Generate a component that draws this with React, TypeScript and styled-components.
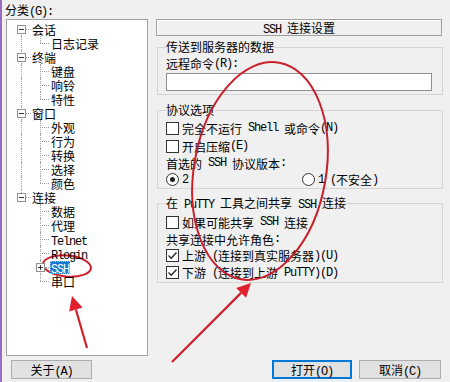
import React from 'react'
import styled, { createGlobalStyle } from 'styled-components'

const GlobalStyle = createGlobalStyle`
  html, body {
    margin: 0;
    padding: 0;
    background: #f0f0f0;
  }
  body {
    font-family: "Noto Sans CJK SC", "Liberation Sans", sans-serif;
    font-size: 12px;
    color: #000;
  }
`

const Window = styled.div`
  position: relative;
  box-sizing: border-box;
  width: 450px;
  height: 382px;
  padding-top: 2px;
  border-left: 2px solid #9b6bbf;
  background: #f0f0f0;
  display: flex;
  flex-direction: column;
  overflow: hidden;
`

const Body = styled.div`
  display: flex;
  height: 354px;
`

const Sidebar = styled.div`
  width: 142px;
  margin-left: 4px;
  display: flex;
  flex-direction: column;
`

const Caption = styled.div`
  height: 17px;
  line-height: 15px;
  margin-left: -1px;
`

const TreeBox = styled.div`
  flex: 1;
  box-sizing: border-box;
  padding-top: 2px;
  background: #fff;
  border: 1px solid #a0a0a0;
`

const Row = styled.div<{ $level: number }>`
  position: relative;
  height: 14px;
  display: flex;
  align-items: center;
  padding-left: ${(p) => (p.$level === 0 ? 24 : 43)}px;
`

const Label = styled.span<{ $selected?: boolean }>`
  position: relative;
  z-index: 1;
  height: 13px;
  line-height: 13px;
  padding: 0 1px;
  white-space: nowrap;
  background: ${(p) => (p.$selected ? '#1b78d0' : 'transparent')};
  color: ${(p) => (p.$selected ? '#fff' : '#000')};
  outline: ${(p) => (p.$selected ? '1px dotted #9cc8f0' : 'none')};
  outline-offset: -1px;
`

const VLine = styled.span<{ $left: number; $top: number; $bottom: number }>`
  position: absolute;
  left: ${(p) => p.$left}px;
  top: ${(p) => p.$top}px;
  bottom: ${(p) => p.$bottom}px;
  border-left: 1px dotted #a0a0a0;
`

const HLine = styled.span<{ $left: number; $width: number }>`
  position: absolute;
  top: 7px;
  left: ${(p) => p.$left}px;
  width: ${(p) => p.$width}px;
  border-top: 1px dotted #a0a0a0;
`

const Expander = styled.span<{ $left: number; $open: boolean }>`
  position: absolute;
  z-index: 1;
  left: ${(p) => p.$left}px;
  top: 3px;
  box-sizing: border-box;
  width: 9px;
  height: 9px;
  border: 1px solid #919191;
  background: #fff;

  &::before {
    content: '';
    position: absolute;
    left: 1px;
    top: 3px;
    width: 5px;
    height: 1px;
    background: #333;
  }

  &::after {
    content: '';
    display: ${(p) => (p.$open ? 'none' : 'block')};
    position: absolute;
    left: 3px;
    top: 1px;
    width: 1px;
    height: 5px;
    background: #333;
  }
`

const Panel = styled.div`
  width: 287px;
  margin-left: 8px;
  padding-top: 17px;
`

const Header = styled.div`
  box-sizing: border-box;
  width: 286px;
  height: 17px;
  line-height: 15px;
  text-align: center;
  border: 1px solid #a0a0a0;
  box-shadow: inset 1px 1px #fff;
`

const Group = styled.fieldset<{ $top: number; $pt: number; $pb: number }>`
  min-width: 0;
  width: 286px;
  box-sizing: border-box;
  margin: ${(p) => p.$top}px 0 0 1px;
  padding: ${(p) => p.$pt}px 8px ${(p) => p.$pb}px 8px;
  border: 1px solid #d5d5d5;
`

const Legend = styled.legend`
  padding: 0;
  height: 16px;
  line-height: 16px;
`

const Line = styled.div<{ $h: number }>`
  height: ${(p) => p.$h}px;
  display: flex;
  align-items: center;
  white-space: nowrap;
`

const Input = styled.div`
  box-sizing: border-box;
  width: 266px;
  height: 18px;
  margin-top: 1px;
  background: #fff;
  border: 1px solid #8f8f8f;
`

const Box = styled.span<{ $round?: boolean }>`
  flex: none;
  position: relative;
  box-sizing: border-box;
  width: 13px;
  height: 13px;
  margin-right: 3px;
  background: #fff;
  border: 1px solid #333;
  border-radius: ${(p) => (p.$round ? '50%' : '0')};
  display: flex;
  align-items: center;
  justify-content: center;
`

const Dot = styled.span`
  width: 5px;
  height: 5px;
  border-radius: 50%;
  background: #222;
`

const Radios = styled.div`
  display: grid;
  grid-template-columns: 136px 136px;
  height: 15px;
  align-items: center;
`

const Option = styled.div`
  display: flex;
  align-items: center;
  white-space: nowrap;
`

const Half = styled.span`
  font-family: "Liberation Mono", monospace;
  letter-spacing: -1.2px;
  white-space: pre;
`

const Footer = styled.div`
  display: flex;
  margin-top: 4px;
  padding: 0 9px;
`

const Button = styled.button<{ $w: number; $primary?: boolean }>`
  box-sizing: border-box;
  width: ${(p) => p.$w}px;
  height: 19px;
  margin: 0;
  padding: 0;
  font: inherit;
  color: #000;
  line-height: ${(p) => (p.$primary ? 15 : 17)}px;
  background: #e1e1e1;
  border: ${(p) => (p.$primary ? '2px solid #0078d7' : '1px solid #adadad')};
`

const Spacer = styled.div`
  flex: 1;
`

const Gap = styled.div`
  width: 7px;
`

const Overlay = styled.svg`
  position: absolute;
  left: -2px;
  top: 0;
  pointer-events: none;
`

function T({ s }: { s: string }) {
  return (
    <>
      {s.split(/([\x20-\x7e]+)/).map((part, i) =>
        /^[\x20-\x7e]+$/.test(part) ? <Half key={i}>{part}</Half> : part,
      )}
    </>
  )
}

const tree = [
  { label: '会话', children: ['日志记录'] },
  { label: '终端', children: ['键盘', '响铃', '特性'] },
  { label: '窗口', children: ['外观', '行为', '转换', '选择', '颜色'] },
  { label: '连接', children: ['数据', '代理', 'Telnet', 'Rlogin', 'SSH', '串口'] },
]

function Tree() {
  const rows: React.ReactNode[] = []
  tree.forEach((node, i) => {
    const lastRoot = i === tree.length - 1
    rows.push(
      <Row key={node.label} $level={0}>
        <VLine $left={14} $top={i === 0 ? 7 : 0} $bottom={lastRoot ? 7 : 0} />
        <HLine $left={14} $width={10} />
        <Expander $left={10} $open />
        <Label>
          <T s={node.label} />
        </Label>
      </Row>,
    )
    node.children.forEach((child, j) => {
      const lastChild = j === node.children.length - 1
      const ssh = child === 'SSH'
      rows.push(
        <Row key={node.label + child} $level={1}>
          {!lastRoot && <VLine $left={14} $top={0} $bottom={0} />}
          <VLine $left={33} $top={0} $bottom={lastChild ? 7 : 0} />
          <HLine $left={33} $width={9} />
          {ssh && <Expander $left={29} $open={false} />}
          <Label $selected={ssh}>
            <T s={child} />
          </Label>
        </Row>,
      )
    })
  })
  return <TreeBox>{rows}</TreeBox>
}

function Check({ on }: { on?: boolean }) {
  return (
    <Box>
      {on && (
        <svg width="11" height="11" viewBox="0 0 11 11">
          <path d="M1.5 5.5 L4.2 8.2 L9.5 2.5" fill="none" stroke="#222" strokeWidth="1.3" />
        </svg>
      )}
    </Box>
  )
}

function Arrow({ x1, y1, x2, y2 }: { x1: number; y1: number; x2: number; y2: number }) {
  const dx = x2 - x1
  const dy = y2 - y1
  const len = Math.hypot(dx, dy)
  const ux = dx / len
  const uy = dy / len
  const bx = x2 - ux * 14
  const by = y2 - uy * 14
  const pts = [
    [x2, y2],
    [bx - uy * 7, by + ux * 7],
    [bx + uy * 7, by - ux * 7],
  ]
  return (
    <g>
      <line x1={x1} y1={y1} x2={bx} y2={by} stroke="#d0202c" strokeWidth="2.2" />
      <polygon points={pts.map((p) => p.join(',')).join(' ')} fill="#e0202c" />
    </g>
  )
}

export default function App() {
  return (
    <>
      <GlobalStyle />
      <Window>
        <Body>
          <Sidebar>
            <Caption>
              <T s="分类(G):" />
            </Caption>
            <Tree />
          </Sidebar>
          <Panel>
            <Header>
              <T s="SSH 连接设置" />
            </Header>
            <Group $top={3} $pt={0} $pb={3}>
              <Legend>传送到服务器的数据</Legend>
              <Line $h={17}>
                <T s="远程命令(R):" />
              </Line>
              <Input />
            </Group>
            <Group $top={7} $pt={1} $pb={2}>
              <Legend>协议选项</Legend>
              <Line $h={18}>
                <Check />
                <T s="完全不运行 Shell 或命令(N)" />
              </Line>
              <Line $h={18}>
                <Check />
                <T s="开启压缩(E)" />
              </Line>
              <Line $h={16}>
                <T s="首选的 SSH 协议版本:" />
              </Line>
              <Radios>
                <Option>
                  <Box $round>
                    <Dot />
                  </Box>
                  <T s="2" />
                </Option>
                <Option>
                  <Box $round />
                  <T s="1 (不安全)" />
                </Option>
              </Radios>
            </Group>
            <Group $top={6} $pt={2} $pb={1}>
              <Legend>
                <T s="在 PuTTY 工具之间共享 SSH 连接" />
              </Legend>
              <Line $h={18}>
                <Check />
                <T s="如果可能共享 SSH 连接" />
              </Line>
              <Line $h={16}>
                <T s="共享连接中允许角色:" />
              </Line>
              <Line $h={17}>
                <Check on />
                <T s="上游 (连接到真实服务器)(U)" />
              </Line>
              <Line $h={17}>
                <Check on />
                <T s="下游 (连接到上游 PuTTY)(D)" />
              </Line>
            </Group>
          </Panel>
        </Body>
        <Footer>
          <Button $w={81}>
            <T s="关于(A)" />
          </Button>
          <Spacer />
          <Button $w={80} $primary>
            <T s="打开(O)" />
          </Button>
          <Gap />
          <Button $w={82}>
            <T s="取消(C)" />
          </Button>
        </Footer>
        <Overlay width="450" height="382" viewBox="0 0 450 382">
          <ellipse
            cx="67"
            cy="266"
            rx="24"
            ry="10.5"
            transform="rotate(5 67 266)"
            fill="none"
            stroke="#d0202c"
            strokeWidth="2"
          />
          <ellipse
            cx="260"
            cy="171"
            rx="66"
            ry="110"
            transform="rotate(10 260 171)"
            fill="none"
            stroke="#c8202c"
            strokeWidth="2"
          />
          <Arrow x1={87} y1={348} x2={72} y2={296} />
          <Arrow x1={172} y1={362} x2={251} y2={283} />
        </Overlay>
      </Window>
    </>
  )
}
